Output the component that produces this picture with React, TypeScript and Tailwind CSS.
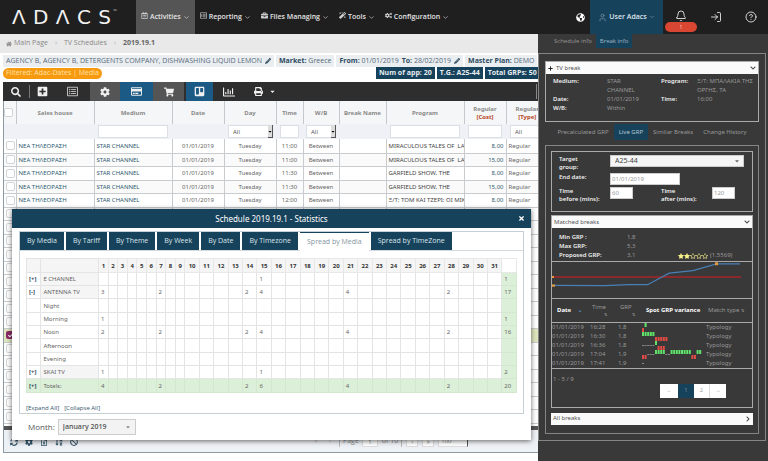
import React from "react";
import {
  FaHome, FaPencilAlt, FaSearch, FaPlusSquare, FaRegListAlt, FaCog, FaRegCreditCard,
  FaShoppingCart, FaTrello, FaRegChartBar, FaPrint, FaCaretDown, FaRegCalendarAlt,
  FaBriefcase, FaMagic, FaCogs, FaGlobeAmericas, FaChevronDown, FaChevronRight,
  FaTimes, FaPlus, FaStar, FaRegStar, FaSyncAlt, FaBan, FaRegFileExcel, FaSortAlphaDown, FaCheck,
} from "react-icons/fa";
import { Bell, ChevronDown, CircleHelp, LogIn, User } from "lucide-react";

const font = "font-['Open_Sans','Noto_Sans',sans-serif]";
const noto = "font-['Noto_Sans','Open_Sans',sans-serif]";

function NavItem({ icon, label, active }: { icon: React.ReactNode; label: string; active?: boolean }) {
  return (
    <button className={`flex items-center gap-[2px] px-[5px] text-[7px] font-semibold text-[#e4e4e4] ${active ? "bg-[#555]" : ""}`}>
      <span className="pb-1 text-[7px] text-[#ccc]">{icon}</span>
      <span>{label}</span>
      <ChevronDown size={7} />
    </button>
  );
}

function TopBar() {
  return (
    <header className="flex h-[34px] bg-[#1f1f1f] text-white">
      <a href="#home" className="flex w-[136px] shrink-0 pl-3" aria-label="ADACS">
        <span className="flex h-[34px] w-[99px] items-center justify-between font-['DejaVu_Sans',sans-serif] text-[20px] leading-none text-[#f2f2f2]">
          <span>Λ</span><span>D</span><span>Λ</span><span>C</span><span>S</span>
        </span>
        <span className="pt-[9px] pl-[2px] text-[5px] leading-[5px] text-[#bbb]">™</span>
      </a>
      <nav className="flex">
        <NavItem icon={<FaRegCalendarAlt />} label="Activities" active />
        <NavItem icon={<FaRegListAlt />} label="Reporting" />
        <NavItem icon={<FaBriefcase />} label="Files Managing" />
        <NavItem icon={<FaMagic />} label="Tools" />
        <NavItem icon={<FaCogs />} label="Configuration" />
      </nav>
      <div className="ml-auto flex items-center">
        <FaGlobeAmericas className="mr-[5px] text-[9px]" />
        <button className="flex h-[34px] w-[73px] items-center justify-center gap-[2px] bg-[#17425c] text-[7px] font-semibold text-[#dfe7ec]">
          <User size={9} strokeWidth={1.5} className="text-[#8fa5b1]" />
          User Adacs
          <ChevronDown size={6} className="text-[#8fa5b1]" />
        </button>
        <button className="flex w-9 flex-col items-center pt-[8px]" aria-label="Notifications">
          <Bell size={12} strokeWidth={1.6} />
          <span className="h-[10px] w-8 rounded-full bg-[#d94632] text-[5px] leading-[10px] text-[#ffd9d2]">1</span>
        </button>
        <button className="flex w-[34px] justify-center" aria-label="Sign in"><LogIn size={12} strokeWidth={1.6} /></button>
        <button className="flex w-[35px] justify-center" aria-label="Help"><CircleHelp size={12} strokeWidth={1.6} /></button>
      </div>
    </header>
  );
}

function Chip({ children, edit }: { children: React.ReactNode; edit?: boolean }) {
  return (
    <div className="flex h-[12px] shrink-0 items-center gap-[3px] bg-[#ebeef1] px-[3px] text-[7px] text-[#54697a]">
      {children}
      {edit && <FaPencilAlt className="text-[6px] text-[#2c4a5e]" />}
    </div>
  );
}

function Pair({ k, v }: { k: string; v: string }) {
  return <span><b className="text-[#2b4a60]">{k}</b> {v}</span>;
}

function ToolButton({ label, width, tone, children }: { label: string; width: string; tone?: string; children: React.ReactNode }) {
  return (
    <button aria-label={label} className={`flex h-[19px] items-center justify-center text-[11px] text-[#f0f0f0] ${width} ${tone ?? ""}`}>
      {children}
    </button>
  );
}

function Toolbar() {
  return (
    <div className="flex items-center bg-[#2e2e2e]">
      <ToolButton label="Search" width="w-[26px]"><FaSearch className="text-[10px]" /></ToolButton>
      <span className="h-[13px] w-px bg-[#777]" />
      <ToolButton label="Add" width="w-[24px]"><FaPlusSquare /></ToolButton>
      <ToolButton label="List" width="w-[36px]"><FaRegListAlt className="text-[#bbb]" /></ToolButton>
      <ToolButton label="Settings" width="w-[30px]" tone="bg-[#555]"><FaCog className="text-[10px]" /></ToolButton>
      <ToolButton label="Costs" width="w-[33px]" tone="bg-[#1b5a84]"><FaRegCreditCard /></ToolButton>
      <ToolButton label="Cart" width="w-[31px]" tone="bg-[#555]"><FaShoppingCart className="text-[10px]" /></ToolButton>
      <span className="w-[2px]" />
      <ToolButton label="Board" width="w-[27px]" tone="bg-[#1b5a84]"><FaTrello /></ToolButton>
      <ToolButton label="Statistics" width="w-[32px]"><FaRegChartBar className="text-[12px]" /></ToolButton>
      <ToolButton label="Print" width="w-[40px]"><FaPrint className="mr-[6px] text-[9px]" /><FaCaretDown className="text-[7px]" /></ToolButton>
      <span className="ml-auto h-[15px] w-[2px] border-l border-[#888]" />
    </div>
  );
}

const gridRows = [
  ["11:00", "MIRACULOUS TALES OF  LADYBUG", "8,00"],
  ["11:00", "MIRACULOUS TALES OF  LADYBUG", "15,00"],
  ["11:30", "GARFIELD SHOW, THE", "8,00"],
  ["11:30", "GARFIELD SHOW, THE", "15,00"],
  ["12:00", "Ξ/Τ: ΤΟΜ ΚΑΙ ΤΖΕΡΙ: ΟΙ ΜΙΚΡΟΙ", "8,00"],
];
const spareRows = Array.from({ length: 16 }, (_, i) => i + 6);

const field = "block h-[13px] w-full border border-[#dcdfe4] bg-white px-[2px] text-[6px]";

function FilterSelect({ label }: { label: string }) {
  return (
    <span className="relative block">
      <select aria-label={label} className={`${field} appearance-none pl-[4px] text-[#555]`}><option>All</option></select>
      <span className="pointer-events-none absolute top-0 right-0 flex h-[13px] w-[5px] items-center justify-center border-r border-b border-[#555] bg-[#ddd] text-[5px] text-black"><FaCaretDown /></span>
    </span>
  );
}

function Grid() {
  const th = "border-r border-[#c4c8cc] font-bold text-[#8a8a8a]";
  const td = "overflow-hidden border-r border-b border-[#c8cccf] px-[2px] whitespace-nowrap";
  return (
    <div className="overflow-hidden border-b border-l border-[#8e9aa3] bg-white">
      <table className={`w-[545px] table-fixed border-collapse text-[6px] leading-[8px] text-[#666] ${noto}`}>
        <colgroup>
          <col className="w-[12px]" /><col className="w-[78px]" /><col className="w-[78px]" /><col className="w-[52px]" />
          <col className="w-[52px]" /><col className="w-[27px]" /><col className="w-[36px]" /><col className="w-[47px]" />
          <col className="w-[78px]" /><col className="w-[42px]" /><col />
        </colgroup>
        <thead>
          <tr className="h-[23px] bg-[#f5f6f7]">
            <th className={th}><input type="checkbox" aria-label="Select all" className="block size-[9px] appearance-none rounded-[2px] border border-[#d2d5d8] bg-white" /></th>
            {["Sales house", "Medium", "Date", "Day", "Time", "W/B", "Break Name", "Program"].map((h) => (
              <th key={h} className={`${th} whitespace-nowrap`}>{h}</th>
            ))}
            <th className={th}>Regular<br /><span className="text-[#b5451f]">[Cost]</span></th>
            <th className={th}>Regular<br /><span className="text-[#b5451f]">[Type]</span></th>
          </tr>
          <tr className="h-[15px] bg-[#eff1f6]">
            <td /><td />
            <td className="px-1"><input aria-label="Filter medium" className={field} /></td>
            <td />
            <td className="pr-[3px] pl-1"><FilterSelect label="Filter day" /></td>
            <td className="px-1"><input aria-label="Filter time" className={field} /></td>
            <td className="px-[3px]"><FilterSelect label="Filter W/B" /></td>
            <td />
            <td className="px-1"><input aria-label="Filter program" className={field} /></td>
            <td className="px-1"><input aria-label="Filter cost" className={field} /></td>
            <td className="pl-1"><FilterSelect label="Filter type" /></td>
          </tr>
        </thead>
        <tbody>
          {gridRows.map(([time, program, cost], i) => (
            <tr key={i} className="odd:h-[14px] even:h-[13px] even:bg-[#fafafa]">
              <td className={`${td} px-[1px]`}><input type="checkbox" aria-label={`Row ${i + 1}`} className="block size-[9px] appearance-none rounded-[2px] border border-[#d2d5d8] bg-white" /></td>
              <td className={`${td} text-[#2e5a6e]`}>ΝΕΑ ΤΗΛΕΟΡΑΣΗ</td>
              <td className={`${td} text-[#2e5a6e]`}>STAR CHANNEL</td>
              <td className={`${td} text-center`}>01/01/2019</td>
              <td className={`${td} text-center`}>Tuesday</td>
              <td className={`${td} text-center`}>{time}</td>
              <td className={`${td} text-center`}>Between</td>
              <td className={td} />
              <td className={`${td} whitespace-pre text-[#444]`}>{program}</td>
              <td className={`${td} px-[1px] text-right text-[#2e5a6e]`}>{cost}</td>
              <td className={td}>Regular</td>
            </tr>
          ))}
          {spareRows.map((n) => (
            <tr key={n} className={`odd:h-[14px] even:h-[13px] ${n === 15 ? "bg-[#dfe6bd]" : ""}`}>
              <td className={`${td} px-[1px]`}>
                {n === 15 ? (
                  <span className="flex size-[8px] items-center justify-center rounded-[2px] bg-[#8a2a66] text-[5px] text-white"><FaCheck /></span>
                ) : (
                  <input type="checkbox" aria-label={`Row ${n}`} className="block size-[9px] appearance-none rounded-[2px] border border-[#d2d5d8] bg-white" />
                )}
              </td>
              {[1, 2, 3, 4, 5, 6, 7, 8, 9, 10].map((c) => <td key={c} className={td} />)}
            </tr>
          ))}
        </tbody>
      </table>
      <div className="mt-[2px] h-[4px] bg-[#555]" />
      <div className="flex h-[22px] items-center bg-[#eef1f5] pt-[2px] pl-[6px] text-[6px] text-[#888]">
        <div className="flex w-[301px] gap-[7px] text-[8px] text-[#34556b]">
          <button aria-label="Reload"><FaSyncAlt /></button>
          <button aria-label="Options"><FaCog /></button>
          <button aria-label="Export"><FaRegFileExcel /></button>
          <button aria-label="Sort"><FaSortAlphaDown /></button>
          <button aria-label="Clear"><FaBan /></button>
        </div>
        <div className="flex items-center gap-[4px] whitespace-nowrap text-[7px]">
          <button className="w-[10px] text-[#bbb]">«</button>
          <button className="w-[10px] text-[#bbb]">‹</button>
          <label className="flex items-center gap-[3px] border-l border-[#bbb] pl-[3px]">Page
            <input defaultValue="1" className="h-[11px] w-[16px] border border-[#ddd] bg-white text-center text-[6px]" />
          </label>
          <span className="border-r border-[#bbb] pr-[3px]">of 10</span>
          <button className="h-[11px] w-[12px] border border-[#ddd] bg-white leading-[8px]">›</button>
          <button className="h-[11px] w-[12px] border border-[#ddd] bg-white leading-[8px]">»</button>
          <select aria-label="Rows per page" className="h-[11px] w-[30px] appearance-none border border-[#ddd] border-r-[#555] bg-white pl-[2px] text-[6px]"><option>100</option></select>
        </div>
      </div>
    </div>
  );
}

const days = Array.from({ length: 31 }, (_, i) => i + 1);
type StatRow = { mark: string; name: string; head?: boolean; v: Record<number, number>; total: string };
const stats: StatRow[] = [
  { mark: "[+]", name: "E CHANNEL", head: true, v: { 15: 1 }, total: "1" },
  { mark: "[-]", name: "ANTENNA TV", head: true, v: { 1: 3, 7: 2, 14: 2, 15: 4, 21: 4, 28: 2 }, total: "17" },
  { mark: "", name: "Night", v: {}, total: "" },
  { mark: "", name: "Morning", v: { 1: 1 }, total: "1" },
  { mark: "", name: "Noon", v: { 1: 2, 7: 2, 14: 2, 15: 4, 21: 4, 28: 2 }, total: "16" },
  { mark: "", name: "Afternoon", v: {}, total: "" },
  { mark: "", name: "Evening", v: {}, total: "" },
  { mark: "[+]", name: "SKAI TV", head: true, v: { 1: 1, 15: 1 }, total: "2" },
  { mark: "[+]", name: "Totals:", v: { 1: 4, 7: 2, 14: 2, 15: 6, 21: 4, 28: 2 }, total: "20" },
];
const tabs = ["By Media", "By Tariff", "By Theme", "By Week", "By Date", "By Timezone", "Spread by Media", "Spread by TimeZone"];

function StatisticsDialog() {
  return (
    <section role="dialog" aria-label="Schedule statistics" className="absolute top-[175px] left-3 w-[519px] bg-white shadow-[0_1px_5px_rgba(0,0,0,0.6)]">
      <div className="flex h-[19px] items-center bg-[#17425c] pl-[19px] text-white">
        <h2 className={`flex-1 text-center text-[8px] ${noto}`}>Schedule 2019.19.1 - Statistics</h2>
        <button aria-label="Close" className="flex w-[19px] justify-center text-[7px]"><FaTimes /></button>
      </div>
      <div className="px-[7px] pt-[3px]">
        <div className="border border-[#c5cfd6]">
          <div role="tablist" className="flex h-[19px] gap-[2px] border-b border-[#d5dade] text-[7px]">
            {tabs.map((t) => (
              <button key={t} role="tab" aria-selected={t === "Spread by Media"}
                className={`px-[7px] whitespace-nowrap ${t === "Spread by Media" ? "h-[19px] border-t border-[#17425c] bg-white text-[#8494a0]" : "h-[18px] bg-[#17425c] text-[#dbe5eb]"}`}>
                {t}
              </button>
            ))}
          </div>
          <div className="px-[6px] pt-[7px]">
            <table className={`w-full table-fixed border-collapse text-[6px] leading-[8px] text-[#666] ${noto}`}>
              <colgroup>
                <col className="w-[12px]" /><col className="w-[48px]" />
                {days.map((d) => <col key={d} className={d < 10 ? "w-[8px]" : "w-[12px]"} />)}
                <col className="w-[12px]" />
              </colgroup>
              <thead>
                <tr className="h-[14px] bg-[#f5f5f5]">
                  <th className="border border-[#e4e4e4]" /><th className="border border-[#e4e4e4]" />
                  {days.map((d) => <th key={d} className="border border-[#e8e8e8] text-center font-bold text-[#333]">{d}</th>)}
                  <th className="border border-[#e8e8e8] bg-white" />
                </tr>
              </thead>
              <tbody>
                {stats.map((r) => {
                  const isTotal = r.name === "Totals:";
                  const line = isTotal ? "border-[#d3e8cf]" : "border-[#e4e4e4]";
                  return (
                    <tr key={r.name} className={`h-[13px] nth-[3n]:h-[14px] ${isTotal ? "bg-[#dcefd8]" : ""}`}>
                      <td className={`border ${line} pl-[2px] font-bold text-[#2b4a5e]`}>{r.mark}</td>
                      <td className={`border ${line} pl-[2px] whitespace-nowrap ${r.head ? "bg-[#f5f5f5]" : ""}`}>{r.name}</td>
                      {days.map((d) => <td key={d} className={`border ${line} pl-[2px]`}>{r.v[d] ?? ""}</td>)}
                      <td className="border border-[#d3e8cf] bg-[#dcefd8] pl-[2px]">{r.total}</td>
                    </tr>
                  );
                })}
              </tbody>
            </table>
            <div className="flex h-[20px] items-end gap-[5px] text-[6px] leading-[9px] text-[#34556b]">
              <button>[Expand All]</button><button>[Collapse All]</button>
            </div>
          </div>
        </div>
      </div>
      <div className="flex h-[26px] items-center gap-[3px] pl-4 text-[#555]">
        <label htmlFor="month" className="text-[8px]">Month:</label>
        <span className="relative">
          <select id="month" className="block h-[16px] w-[78px] appearance-none border border-[#ccc] bg-[#f3f3f3] pl-1 text-[7px] font-semibold text-[#555]"><option>January 2019</option></select>
          <FaCaretDown className="pointer-events-none absolute top-[5px] right-[5px] text-[6px] text-[#888]" />
        </span>
      </div>
    </section>
  );
}

function Workspace() {
  return (
    <main className="relative min-w-0 flex-1 overflow-hidden bg-white">
      <nav aria-label="Breadcrumb" className="flex h-[19px] items-center gap-[7px] bg-[#e9e9e9] pl-[6px] text-[7px] text-[#888]">
        <a href="#main" className="flex items-center gap-[2px]"><FaHome className="text-[6px]" />Main Page</a>
        <span className="text-[#aaa]">›</span>
        <a href="#tv">TV Schedules</a>
        <span className="text-[#aaa]">›</span>
        <b className="text-[#666]">2019.19.1</b>
      </nav>
      <div className="pt-[2px] pl-[3px]">
        <div className="flex gap-[2px] overflow-hidden whitespace-nowrap">
          <Chip edit>AGENCY B, AGENCY B, DETERGENTS COMPANY, DISHWASHING LIQUID LEMON</Chip>
          <Chip><Pair k="Market:" v="Greece" /></Chip>
          <Chip edit><Pair k="From:" v="01/01/2019" /><Pair k="To:" v="28/02/2019" /></Chip>
          <Chip><Pair k="Master Plan:" v="DEMO" /></Chip>
        </div>
        <div className="flex h-[15px] gap-[2px] overflow-hidden text-[7px] leading-[12px] whitespace-nowrap">
          <span className="mt-[1px] mr-[272px] h-[11px] shrink-0 rounded-full bg-[#f79a10] px-[3px] leading-[10px] text-[#ffe2a8]">Filtered: Adac-Dates | Media</span>
          {["Num of app: 20", "T.G.: A25-44", "Total GRPs: 50"].map((b) => (
            <b key={b} className="h-[12px] shrink-0 bg-[#17425c] px-[3px] text-[#e6edf1]">{b}</b>
          ))}
        </div>
        <Toolbar />
        <Grid />
      </div>
      <StatisticsDialog />
    </main>
  );
}

function PanelTitle({ children, open, plus }: { children: React.ReactNode; open?: boolean; plus?: boolean }) {
  return (
    <button className="flex h-[12px] w-full items-center gap-[3px] bg-[#fafafa] px-[2px] text-[6px] text-[#555]">
      {plus && <FaPlus className="text-[5px] text-[#222]" />}
      <span>{children}</span>
      <span className="ml-auto text-[6px] text-[#444]">{open ? <FaChevronDown /> : <FaChevronRight />}</span>
    </button>
  );
}

/* Each character is one spot: u above, d below, - level. */
const breaks = [
  { time: "16:28", grp: "1,8", spots: "du" },
  { time: "16:30", grp: "1,8", spots: "uuuuuddddd" },
  { time: "16:36", grp: "1,8", spots: "-----uddd" },
  { time: "17:04", grp: "1,9", spots: "dd---uuuu--uuuuuuuudduu" },
  { time: "17:41", grp: "1,9", spots: "-" },
];

function Variance({ spots }: { spots: string }) {
  return (
    <svg width="60" height="9" viewBox="0 0 60 9" className="block">
      {spots.split("").map((s, i) => (
        <rect key={i} x={i * 2.6} width={2} y={s === "u" ? 0 : s === "d" ? 5 : 4} height={s === "-" ? 0.7 : 4}
          fill={s === "u" ? "#5fe36a" : s === "d" ? "#e04b45" : "#aaa"} />
      ))}
    </svg>
  );
}

const darkInput = "h-[12px] border border-[#ccc] bg-white px-[1px] text-[6px] text-[#999]";

function BreakPanel() {
  return (
    <aside className="flex w-[230px] shrink-0 flex-col bg-[#393939] text-[6px] leading-[9px] text-[#989898]">
      <div className="flex h-[19px] pl-3">
        <button className="h-[14px] px-1">Schedule info</button>
        <button className="h-[14px] bg-[#17425c] px-1 text-[#9db4c2]">Break info</button>
      </div>
      <div className={`mr-[2px] border border-[#858585] px-[6px] pt-[7px] pb-[6px] ${noto}`}>
        <div className="h-[61px] border border-[#aaa]">
          <PanelTitle open plus>TV break</PanelTitle>
          <dl className="grid grid-cols-[54px_54px_36px_1fr] pt-[3px] pl-[7px] [&_dt]:font-semibold [&_dt]:text-[#f0f0f0]">
            <dt>Medium:</dt><dd>STAR<br />CHANNEL</dd><dt>Program:</dt><dd className="whitespace-nowrap">Ξ/Τ: ΜΠΑΛΑΚΙΑ ΤΗΣ<br />ΟΡΓΗΣ, ΤΑ</dd>
            <dt>Date:</dt><dd>01/01/2019</dd><dt>Time:</dt><dd>16:00</dd>
            <dt>W/B:</dt><dd>Within</dd>
          </dl>
        </div>
        <div className="mt-[2px] flex h-[16px] justify-center">
          <button className="px-[5px]">Precalculated GRP</button>
          <button className="bg-[#17425c] px-[5px] text-[#b4c6d0]">Live GRP</button>
          <button className="px-[5px]">Similar Breaks</button>
          <button className="px-[5px]">Change History</button>
        </div>
        <div className="mt-[5px] border border-[#858585] p-[5px] pb-[8px]">
          <form className="grid grid-cols-[51px_51px_51px_1fr] gap-y-[2px] border border-[#aaa] px-[7px] pt-[3px] pb-[8px] leading-[8px] [&_label]:font-semibold [&_label]:text-[#f0f0f0]">
            <label htmlFor="target">Target<br />group:</label>
            <span className="relative col-span-3 mr-[1px]">
              <select id="target" className="block h-[12px] w-full appearance-none border border-[#ccc] bg-[#f5f5f5] pl-1 text-[7px] text-[#444]"><option>A25-44</option></select>
              <FaCaretDown className="pointer-events-none absolute top-[3px] right-[4px] text-[6px] text-[#666]" />
            </span>
            <label htmlFor="end">End date:</label>
            <input id="end" defaultValue="01/01/2019" className={`${darkInput} col-span-3 w-[70px]`} />
            <label htmlFor="before">Time<br />before (mins):</label>
            <input id="before" defaultValue="60" className={`${darkInput} w-[23px]`} />
            <label htmlFor="after">Time<br />after (mins):</label>
            <input id="after" defaultValue="120" className={`${darkInput} w-[23px]`} />
          </form>
          <div className="mt-[3px] border border-[#aaa]">
            <PanelTitle open>Matched breaks</PanelTitle>
            <dl className="grid h-[33px] grid-cols-[68px_1fr] content-end px-[7px] pb-[1px] [&_dt]:font-semibold [&_dt]:text-[#f0f0f0]">
              <dt>Min GRP :</dt><dd>1,8</dd>
              <dt>Max GRP:</dt><dd>5,3</dd>
              <dt>Proposed GRP:</dt>
              <dd className="flex items-center">
                <span className="w-[51px]">3,1</span>
                <span className="flex text-[6px] text-[#f5f08a]"><FaStar /><FaStar /><FaRegStar /><FaRegStar /><FaRegStar /></span>
                <span className="pl-[2px]">(1.5569)</span>
              </dd>
            </dl>
            <div className="border-y border-[#aaa]">
              <svg viewBox="0 0 203 36" className="block h-[36px] w-full" aria-label="GRP trend">
                <path d="M0 15h192" stroke="#a8242a" strokeWidth="1.6" fill="none" />
                <path d="M0 23.5 54 23.8 78 22.8H97L119 11 143 8.5 167 1.6H191" stroke="#4a7fb5" strokeWidth="1.3" fill="none" />
                <path d="M0 14h2v2h-2zM0 22.5h3v2.4h-3zM165.500 0h3v3h-3z" fill="#e39a3c" />
              </svg>
            </div>
            <table className="w-full table-fixed">
              <colgroup><col className="w-[38px]" /><col className="w-[28px]" /><col className="w-[24px]" /><col className="w-[64px]" /><col /></colgroup>
              <thead>
                <tr className="h-[23px] border-b border-[#aaa] text-left whitespace-nowrap">
                  <th className="pl-[5px] font-bold text-white"><span className="flex items-center justify-between pr-[8px]">Date<span className="text-[4px] text-[#4a7fb5]">▲</span></span></th>
                  <th className="pl-[2px] font-normal">Time<span className="block pl-[12px] text-[4px] leading-[5px]">⇅</span></th>
                  <th className="pl-[2px] font-normal">GRP<span className="block pl-[12px] text-[4px] leading-[5px]">⇅</span></th>
                  <th className="pl-[4px] font-bold text-white">Spot GRP variance</th>
                  <th className="pl-[2px] font-normal">Match type <span className="text-[4px]">⇅</span></th>
                </tr>
              </thead>
              <tbody>
                {breaks.map((b) => (
                  <tr key={b.time} className="h-[9px]">
                    <td>01/01/2019</td><td>{b.time}</td><td>{b.grp}</td>
                    <td><Variance spots={b.spots} /></td><td>Typology</td>
                  </tr>
                ))}
              </tbody>
            </table>
            <div className="flex h-[39px] justify-between border-t border-[#aaa] pt-[6px] pl-[1px]">
              <span>1 - 5 / 9</span>
              <div className="mt-[9px] mr-[26px] flex h-[14px] bg-white text-[5px] text-[#999]">
                <button className="w-[18px]">←</button>
                <button className="w-[16px] bg-[#17425c] text-[#7f9bab]">1</button>
                <button className="w-[15px]">2</button>
                <button className="w-[17px] border-l border-[#ddd]">→</button>
              </div>
            </div>
          </div>
          <div className="mt-[5px]"><PanelTitle>All breaks</PanelTitle></div>
        </div>
      </div>
    </aside>
  );
}

export default function App() {
  return (
    <div className={`flex min-h-screen flex-col overflow-hidden bg-white ${font}`}>
      <TopBar />
      <div className="flex flex-1">
        <Workspace />
        <BreakPanel />
      </div>
    </div>
  );
}
